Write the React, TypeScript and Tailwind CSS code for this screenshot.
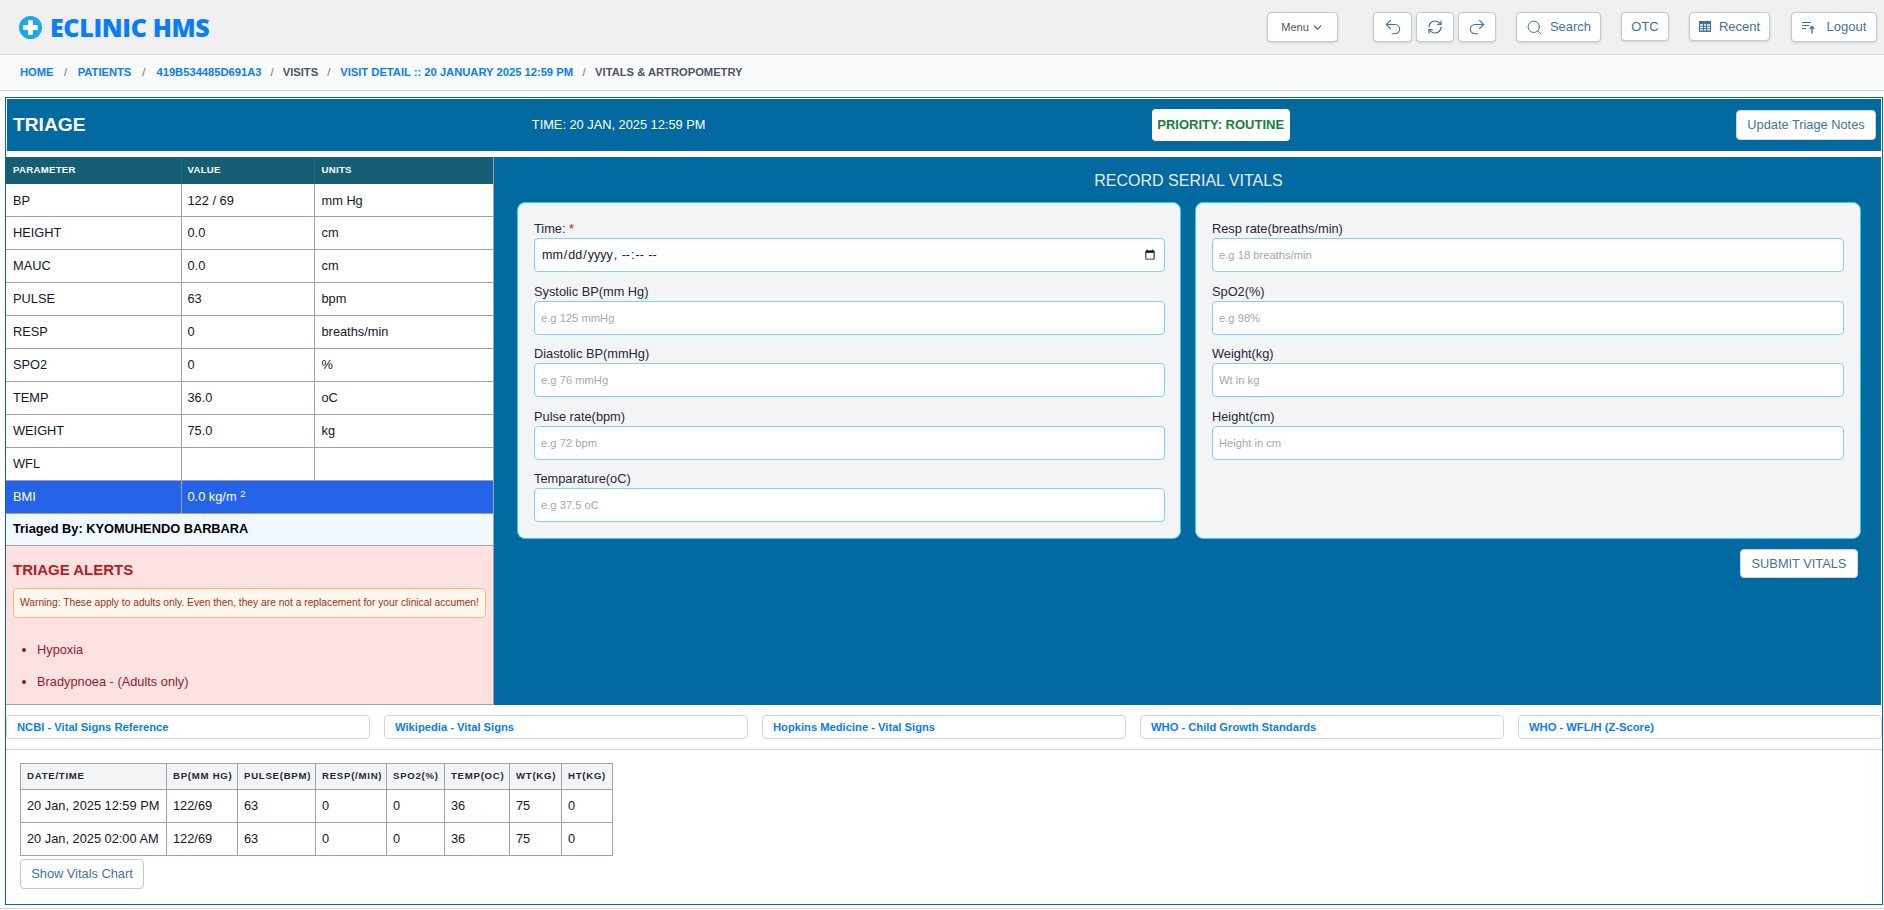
import React from 'react';
import { ChevronDown, Undo2, Redo2, RefreshCw, Search } from 'lucide-react';

const navBtn = 'bg-white border border-[#b9cbdc] rounded flex items-center justify-center shadow-sm';
const navBtnText = 'text-[#3f739e] text-[13px]';

const triageRows = [
  ['BP', '122 / 69', 'mm Hg'],
  ['HEIGHT', '0.0', 'cm'],
  ['MAUC', '0.0', 'cm'],
  ['PULSE', '63', 'bpm'],
  ['RESP', '0', 'breaths/min'],
  ['SPO2', '0', '%'],
  ['TEMP', '36.0', 'oC'],
  ['WEIGHT', '75.0', 'kg'],
  ['WFL', '', ''],
];

const leftFields = [
  ['Systolic BP(mm Hg)', 'e.g 125 mmHg'],
  ['Diastolic BP(mmHg)', 'e.g 76 mmHg'],
  ['Pulse rate(bpm)', 'e.g 72 bpm'],
  ['Temparature(oC)', 'e.g 37.5 oC'],
];

const rightFields = [
  ['Resp rate(breaths/min)', 'e.g 18 breaths/min'],
  ['SpO2(%)', 'e.g 98%'],
  ['Weight(kg)', 'Wt in kg'],
  ['Height(cm)', 'Height in cm'],
];

const links = [
  'NCBI - Vital Signs Reference',
  'Wikipedia - Vital Signs',
  'Hopkins Medicine - Vital Signs',
  'WHO - Child Growth Standards',
  'WHO - WFL/H (Z-Score)',
];

const historyCols = [
  ['DATE/TIME', 'w-[146px]'],
  ['BP(MM HG)', 'w-[71px]'],
  ['PULSE(BPM)', 'w-[78px]'],
  ['RESP(/MIN)', 'w-[71px]'],
  ['SPO2(%)', 'w-[58px]'],
  ['TEMP(OC)', 'w-[65px]'],
  ['WT(KG)', 'w-[52px]'],
  ['HT(KG)', 'w-[51px]'],
];

const historyRows = [
  ['20 Jan, 2025 12:59 PM', '122/69', '63', '0', '0', '36', '75', '0'],
  ['20 Jan, 2025 02:00 AM', '122/69', '63', '0', '0', '36', '75', '0'],
];

function Field({ label, placeholder }: { label: string; placeholder: string }) {
  return (
    <div className="mb-[11.5px]">
      <label className="block text-[12.8px] leading-[16px] mb-px text-[#1f2937]">{label}</label>
      <input
        type="text"
        placeholder={placeholder}
        className="w-full h-[34px] bg-white border border-[#7dd3fc] rounded px-[6px] text-[11.2px] outline-none placeholder:text-[#a3a8b0]"
      />
    </div>
  );
}

export default function App() {
  return (
    <div className="w-[1884px] h-[910px] bg-white flex flex-col overflow-hidden font-['Liberation_Sans',Arial,sans-serif] text-[#111827]">
      {/* top bar */}
      <header className="h-[55px] shrink-0 bg-[#f0f0f0] border-b border-[#d1d5db] flex items-center pl-[19px] pr-[7px]">
        <svg width="23" height="23" viewBox="0 0 24 24" className="shrink-0">
          <circle cx="12" cy="12" r="12" fill="#1ea7ea" />
          <path d="M9.500 4.500h5v5h5v5h-5v5h-5v-5h-5v-5h5z" fill="#fff" />
        </svg>
        <span className="ml-[8px] text-[25px] font-extrabold leading-none tracking-[-0.35px] text-[#0a7cff] font-['Open_Sans',sans-serif]">ECLINIC HMS</span>
        <div className="ml-auto flex items-start">
          <button className={`${navBtn} h-[30px] w-[71px] text-[11px] text-[#4b5563] gap-[2px]`}>
            Menu <ChevronDown size={13} strokeWidth={2} />
          </button>
          <button className={`${navBtn} ${navBtnText} h-[30px] w-[39px] ml-[35px]`}><Undo2 size={20} strokeWidth={1.3} /></button>
          <button className={`${navBtn} ${navBtnText} h-[30px] w-[38px] ml-[4px]`}><RefreshCw size={16} strokeWidth={1.8} /></button>
          <button className={`${navBtn} ${navBtnText} h-[30px] w-[38px] ml-[4px]`}><Redo2 size={20} strokeWidth={1.3} /></button>
          <button className={`${navBtn} ${navBtnText} h-[30px] w-[85px] ml-[20px] gap-[7px]`}><Search size={17} strokeWidth={1.4} />Search</button>
          <button className={`${navBtn} ${navBtnText} h-[29px] w-[48px] ml-[20px]`}>OTC</button>
          <button className={`${navBtn} ${navBtnText} h-[29px] w-[81px] ml-[20px] gap-[8px]`}>
            <svg width="12" height="11" viewBox="0 0 12 11" fill="currentColor">
              <path d="M0 0h12v11H0zM1 3.200v1.600h3V3.200zm4 0v1.600h2V3.200zm3 0v1.600h3V3.200zM1 5.800v1.400h3V5.800zm4 0v1.400h2V5.800zm3 0v1.400h3V5.800zM1 8.200v1.300h3V8.200zm4 0v1.300h2V8.200zm3 0v1.300h3V8.200z" fillRule="evenodd" />
            </svg>
            Recent
          </button>
          <button className={`${navBtn} ${navBtnText} h-[30px] w-[86px] ml-[21px] gap-[11px]`}>
            <svg width="14" height="13" viewBox="0 0 14 13" fill="none" stroke="currentColor" strokeWidth="1.2">
              <path d="M0 1.500h9M0 4.500h7M0 7.500h4" />
              <path d="M10 12.500V5.500M7.800 7.800 10 5.500l2.200 2.300" strokeWidth="1.400" />
            </svg>
            Logout
          </button>
        </div>
      </header>

      {/* breadcrumb */}
      <nav className="h-[36px] shrink-0 bg-[#f9fafb] border-b border-[#d1d5db] flex items-center pl-[20px] text-[11.2px] font-bold text-[#0a7cff]">
        <a>HOME</a>
        <span className="mx-[10.5px] font-normal text-[#6b7280]">/</span>
        <a>PATIENTS</a>
        <span className="mx-[11px] font-normal text-[#6b7280]">/</span>
        <a>419B534485D691A3</a>
        <span className="mx-[9px] font-normal text-[#6b7280]">/</span>
        <span className="text-[#4b5563]">VISITS</span>
        <span className="mx-[9px] font-normal text-[#6b7280]">/</span>
        <a className="ml-[1px]">VISIT DETAIL :: 20 JANUARY 2025 12:59 PM</a>
        <span className="mx-[9.5px] font-normal text-[#6b7280]">/</span>
        <span className="text-[#4b5563]">VITALS &amp; ARTROPOMETRY</span>
      </nav>

      {/* main card */}
      <main className="mt-[6px] ml-[5px] mr-[1px] h-[808px] shrink-0 border border-[#0369a1] p-px flex flex-col">
        <div className="h-[52px] shrink-0 bg-[#0369a1] flex items-center justify-between pl-[6px] pr-[5px] text-white">
          <h1 className="text-[19.2px] font-bold">TRIAGE</h1>
          <span className="text-[12.8px]">TIME: 20 JAN, 2025 12:59 PM</span>
          <span className="h-[32px] w-[138px] bg-white rounded text-[13px] font-bold text-[#15803d] flex items-center justify-center">PRIORITY: ROUTINE</span>
          <button className="h-[30px] w-[140px] bg-white border border-[#d1d5db] rounded text-[12.8px] text-[#3f739e]">Update Triage Notes</button>
        </div>

        <div className="mt-[6px] h-[548px] shrink-0 bg-[#0369a1] flex -ml-px">
          {/* left column */}
          <div className="w-[488px] shrink-0 flex flex-col bg-white border-r border-[#9ca3af]">
            <table className="w-[487px] table-fixed border-collapse text-[12.8px]">
              <colgroup>
                <col className="w-[175px]" />
                <col className="w-[133px]" />
                <col />
              </colgroup>
              <thead>
                <tr className="h-[27px] bg-[#155e75] text-white text-[9.6px] tracking-[0.3px]">
                  <th className="text-left font-bold pl-[7px] border-r border-[#0e7490]">PARAMETER</th>
                  <th className="text-left font-bold pl-[6px] border-r border-[#0e7490]">VALUE</th>
                  <th className="text-left font-bold pl-[7px]">UNITS</th>
                </tr>
              </thead>
              <tbody>
                {triageRows.map((row, i) => (
                  <tr key={row[0]} className={`${i === 0 ? 'h-[32px]' : 'h-[33px]'} border-b border-[#9ca3af]`}>
                    <td className="pl-[7px] pt-px border-r border-[#9ca3af]">{row[0]}</td>
                    <td className="pl-[6px] pt-px border-r border-[#9ca3af]">{row[1]}</td>
                    <td className="pl-[7px] pt-px">{row[2]}</td>
                  </tr>
                ))}
                <tr className="h-[33px] bg-[#2563eb] text-white border-b border-[#9ca3af]">
                  <td className="pl-[7px] pt-px border-r border-[#9ca3af]">BMI</td>
                  <td colSpan={2} className="pl-[6px] pt-px">0.0 kg/m <sup className="text-[9.6px]">2</sup></td>
                </tr>
              </tbody>
            </table>
            <div className="h-[32px] shrink-0 bg-[#f0f9ff] border-b border-[#9ca3af] flex items-center pl-[7px] text-[12.8px] font-bold text-black">
              Triaged By: KYOMUHENDO BARBARA
            </div>
            <div className="flex-1 bg-[#fee2e2] border-b border-[#9ca3af] px-[7px] text-[#991b1b]">
              <h2 className="mt-[15px] text-[15px] leading-[18px] font-bold text-[#b91c1c]">TRIAGE ALERTS</h2>
              <div className="mt-[9px] h-[30px] bg-[#fff7ed] border border-[#fdba74] rounded flex items-center pl-[6px] text-[10.24px] text-[#9a3412] whitespace-nowrap">
                Warning: These apply to adults only. Even then, they are not a replacement for your clinical accumen!
              </div>
              <ul className="mt-[16px] list-disc pl-[24px] text-[12.8px] marker:text-[#991b1b]">
                <li className="h-[32px] leading-[32px]">Hypoxia</li>
                <li className="h-[32px] leading-[32px]">Bradypnoea - (Adults only)</li>
              </ul>
            </div>
          </div>

          {/* record form */}
          <div className="flex-1 pl-[23px]">
            <h2 className="h-[45px] pt-[14px] pr-[21px] text-center text-[16px] leading-[20px] text-[#e5eef5]">RECORD SERIAL VITALS</h2>
            <div className="flex gap-[14px]">
              <div className="w-[664px] h-[337px] bg-[#f3f4f6] border border-[#22d3ee] rounded-lg pl-[16px] pr-[15px] pt-[18px]">
                <div className="mb-[11.5px]">
                  <label className="block text-[12.8px] leading-[16px] mb-px text-[#1f2937]">
                    Time: <span className="text-[#ff0000]">*</span>
                  </label>
                  <input
                    type="datetime-local"
                    className="w-full h-[34px] bg-white border border-[#7dd3fc] rounded px-[6px] text-[12.5px] text-[#111827] outline-none"
                  />
                </div>
                {leftFields.map((f) => <Field key={f[0]} label={f[0]} placeholder={f[1]} />)}
              </div>
              <div className="w-[666px] h-[337px] bg-[#f3f4f6] border border-[#22d3ee] rounded-lg px-[16px] pt-[18px]">
                {rightFields.map((f) => <Field key={f[0]} label={f[0]} placeholder={f[1]} />)}
              </div>
            </div>
            <div className="flex justify-end mt-[10px] w-[1342px]">
              <button className="h-[29px] w-[118px] mr-[1px] bg-white border border-[#d1d5db] rounded text-[12.8px] text-[#3f739e]">SUBMIT VITALS</button>
            </div>
          </div>
        </div>

        {/* reference links */}
        <div className="h-[45px] shrink-0 -mx-px border-b border-[#d1d5db] flex gap-[14px] pt-[10px]">
          {links.map((l) => (
            <a key={l} className="flex-1 h-[24px] bg-white border border-[#d1d5db] rounded flex items-center pl-[10px] text-[11.2px] font-bold text-[#0a7cff]">{l}</a>
          ))}
        </div>

        {/* serial vitals */}
        <div className="pl-[13px] pt-[13px]">
          <table className="table-fixed border-collapse text-[12.8px] w-[592px]">
            <thead>
              <tr className="h-[26px] bg-[#f3f4f6] text-[9.6px] text-[#1f2937] tracking-[0.75px]">
                {historyCols.map((c) => (
                  <th key={c[0]} className={`${c[1]} border border-[#9ca3af] text-left font-bold pl-[6px] whitespace-nowrap`}>{c[0]}</th>
                ))}
              </tr>
            </thead>
            <tbody>
              {historyRows.map((row) => (
                <tr key={row[0]} className="h-[33px]">
                  {row.map((v, i) => (
                    <td key={i} className="border border-[#9ca3af] pl-[6px] whitespace-nowrap">{v}</td>
                  ))}
                </tr>
              ))}
            </tbody>
          </table>
          <button className="mt-[3px] h-[30px] w-[124px] bg-white border border-[#b9cbdc] rounded text-[12.8px] text-[#3f739e]">Show Vitals Chart</button>
        </div>
      </main>

      <div className="mt-[3px] h-px shrink-0 bg-[#d1d5db]" />
    </div>
  );
}
